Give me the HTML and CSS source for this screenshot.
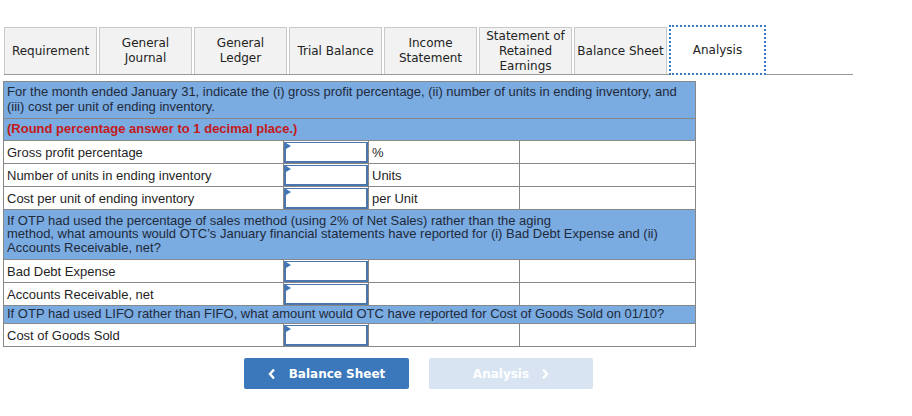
FILE: index.html
```html
<!DOCTYPE html>
<html>
<head>
<meta charset="utf-8">
<link rel="stylesheet" href="styles.css">
</head>
<body>
<div class="page">
  <div class="tabs">
    <div class="tab">Requirement</div>
    <div class="tab">General<br>Journal</div>
    <div class="tab">General<br>Ledger</div>
    <div class="tab">Trial Balance</div>
    <div class="tab">Income<br>Statement</div>
    <div class="tab">Statement of<br>Retained<br>Earnings</div>
    <div class="tab">Balance Sheet</div>
    <div class="tab active">Analysis</div>
  </div>

  <table class="grid">
    <colgroup>
      <col class="c1"><col class="c2"><col class="c3"><col class="c4">
    </colgroup>
    <tr class="head"><td colspan="4">For the month ended January 31, indicate the (i) gross profit percentage, (ii) number of units in ending inventory, and<br>(iii) cost per unit of ending inventory.</td></tr>
    <tr class="head note"><td colspan="4">(Round percentage answer to 1 decimal place.)</td></tr>
    <tr><td>Gross profit percentage</td><td class="in"><div class="box"><span class="flag"></span></div></td><td>%</td><td></td></tr>
    <tr><td>Number of units in ending inventory</td><td class="in"><div class="box"><span class="flag"></span></div></td><td>Units</td><td></td></tr>
    <tr><td>Cost per unit of ending inventory</td><td class="in"><div class="box"><span class="flag"></span></div></td><td>per Unit</td><td></td></tr>
    <tr class="head three"><td colspan="4">If OTP had used the percentage of sales method (using 2% of Net Sales) rather than the aging<br>method, what amounts would OTC’s January financial statements have reported for (i) Bad Debt Expense and (ii)<br>Accounts Receivable, net?</td></tr>
    <tr><td>Bad Debt Expense</td><td class="in"><div class="box"><span class="flag"></span></div></td><td></td><td></td></tr>
    <tr><td>Accounts Receivable, net</td><td class="in"><div class="box"><span class="flag"></span></div></td><td></td><td></td></tr>
    <tr class="head one"><td colspan="4">If OTP had used LIFO rather than FIFO, what amount would OTC have reported for Cost of Goods Sold on 01/10?</td></tr>
    <tr><td>Cost of Goods Sold</td><td class="in"><div class="box"><span class="flag"></span></div></td><td></td><td></td></tr>
  </table>

  <div class="nav">
    <button class="btn prev"><svg width="8" height="12" viewBox="0 0 8 12"><polyline points="6,1.5 2,6 6,10.5" fill="none" stroke="#fff" stroke-width="2.4"/></svg><span>Balance Sheet</span></button>
    <button class="btn next" disabled><span>Analysis</span><svg width="8" height="12" viewBox="0 0 8 12"><polyline points="2,1.5 6,6 2,10.5" fill="none" stroke="#fff" stroke-width="2.4"/></svg></button>
  </div>
</div>
</body>
</html>
```

FILE: styles.css
```css
html, body {
  margin: 0;
  padding: 0;
  background: #fff;
}
.page {
  padding-top: 27px;
  font-family: "Liberation Sans", Arial, sans-serif;
  color: #1a1a1a;
}
.tabs {
  display: flex;
  align-items: flex-end;
  gap: 2px;
  margin-left: 4px;
  width: 849px;
  border-bottom: 1px solid #999;
  box-sizing: border-box;
}
.tab {
  width: 93px;
  height: 47px;
  box-sizing: border-box;
  border: 1px solid #c9c9c9;
  border-bottom: none;
  background: #f2f2f2;
  display: flex;
  align-items: center;
  justify-content: center;
  text-align: center;
  font-family: "DejaVu Sans", Verdana, sans-serif;
  font-size: 12px;
  line-height: 15px;
  color: #222;
}
.tab.active {
  background: #fff;
  height: 50px;
  width: 97px;
  border: 2px dotted #3c78c3;
  margin-top: -3px;
  margin-bottom: -1px;
}
.grid {
  margin: 6px 0 0 3px;
  width: 692px;
  border-collapse: collapse;
  table-layout: fixed;
  font-size: 13px;
}
.c1 { width: 280px; }
.c2 { width: 85px; }
.c3 { width: 151px; }
.c4 { width: 176px; }
.grid td {
  border: 1px solid #888;
  height: 23px;
  padding: 0 3px;
  box-sizing: border-box;
  vertical-align: middle;
  line-height: 15px;
  color: #1f1f1f;
}
.grid tr.head td {
  background: #7aabe1;
  height: 37px;
  padding: 2px 3px 3px;
  line-height: 14.5px;
  color: #1f2a3a;
}
.grid tr.head.note td {
  height: 22px;
  padding: 0 3px;
  color: #c41a1a;
  font-weight: bold;
}
.grid tr.head.three td {
  height: 50px;
  padding: 3px 3px 4px;
  line-height: 13.5px;
}
.grid tr.head.one td {
  height: 18px;
  padding: 0 3px;
}
.grid td.in {
  padding: 0;
  position: relative;
}
.box {
  height: 21px;
  box-sizing: border-box;
  border: 2px solid #4a75ad;
  border-top-width: 1px;
  background: #fff;
  position: relative;
}
.flag {
  position: absolute;
  left: 0;
  top: 0;
  width: 0;
  height: 0;
  border-top: 3px solid transparent;
  border-bottom: 3px solid transparent;
  border-left: 5px solid #3d75bb;
}
.nav {
  display: flex;
  gap: 20px;
  margin: 11px 0 0 244px;
}
.btn {
  height: 31px;
  border: none;
  border-radius: 2px;
  display: flex;
  align-items: center;
  justify-content: center;
  gap: 13px;
  font-family: "DejaVu Sans", Verdana, sans-serif;
  font-weight: bold;
  font-size: 12px;
  color: #fff;
  padding: 0;
}
.btn.prev {
  width: 165px;
  background: #3b77bb;
}
.btn.next {
  width: 164px;
  background: #d8e4f2;
  gap: 12px;
}
```
